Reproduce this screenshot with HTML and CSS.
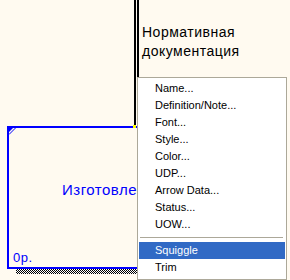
FILE: index.html
```html
<!DOCTYPE html>
<html lang="ru">
<head>
    <meta charset="UTF-8">
    <title>Diagram</title>
    <link rel="stylesheet" href="styles.css">
</head>
<body>
    <div class="canvas">
        <div class="arrow-line line-a"></div>
        <div class="arrow-line line-b"></div>
        <div class="label">Нормативная<br>документация</div>

        <div class="box">
            <svg class="corner" width="8" height="8" viewBox="0 0 8 8">
                <polygon points="0,0 4,0 0,4" fill="#0000ff"/>
                <line x1="0" y1="6.5" x2="6.5" y2="0" stroke="#0000ff" stroke-width="1"/>
            </svg>
            <div class="box-title">Изготовле</div>
            <div class="box-cost">0р.</div>
        </div>
        <div class="box-shadow"></div>
        <div class="handle"></div>

        <!-- контекстное меню стрелки -->
        <ul class="menu">
            <li>Name...</li>
            <li>Definition/Note...</li>
            <li>Font...</li>
            <li>Style...</li>
            <li>Color...</li>
            <li>UDP...</li>
            <li>Arrow Data...</li>
            <li>Status...</li>
            <li>UOW...</li>
            <li class="sep"></li>
            <li class="active">Squiggle</li>
            <li>Trim</li>
        </ul>
    </div>
</body>
</html>
```

FILE: styles.css
```css
body {
    margin: 0;
    padding: 0;
    background-color: #fffaf0;
    overflow: hidden;
}
.canvas {
    position: relative;
    width: 290px;
    height: 280px;
    overflow: hidden;
    font-family: "Liberation Sans", Arial, sans-serif;
}
.arrow-line {
    position: absolute;
    top: 0;
    width: 2px;
    background-color: #000;
}
.line-a {
    left: 134px;
    height: 126px;
}
.line-b {
    left: 137px;
    height: 80px;
}
.label {
    position: absolute;
    left: 142px;
    top: 23px;
    font-size: 14px;
    line-height: 19px;
    letter-spacing: 0.5px;
    color: #000;
}
.box {
    position: absolute;
    left: 7px;
    top: 126px;
    width: 160px;
    height: 139px;
    border: 2px solid #0000ff;
    color: #0000ff;
}
.corner {
    position: absolute;
    left: 0;
    top: 0;
}
.box-title {
    position: absolute;
    left: 53px;
    top: 53px;
    font-size: 15px;
    letter-spacing: 0.5px;
    white-space: nowrap;
}
.box-cost {
    position: absolute;
    left: 4px;
    bottom: 2px;
    font-size: 13px;
    letter-spacing: 0.5px;
}
.box-shadow {
    position: absolute;
    left: 16px;
    top: 269px;
    width: 160px;
    height: 5px;
    background: repeating-conic-gradient(#000 0 25%, #fff 0 50%) 0 0 / 2px 2px;
}
.handle {
    position: absolute;
    left: 133px;
    top: 125px;
    width: 3px;
    height: 3px;
    background-color: #ffff00;
}
.menu {
    position: absolute;
    left: 137px;
    top: 77px;
    width: 146px;
    margin: 0;
    padding: 2px 1px 3px 1px;
    list-style: none;
    background-color: #fff;
    border: 1px solid #aca899;
    font-size: 11px;
    color: #000;
}
.menu li {
    height: 17px;
    line-height: 17px;
    padding-left: 16px;
}
.menu li.sep {
    height: 4px;
    margin: 4px 2px 0 1px;
    padding: 0;
    border-top: 1px solid #aca899;
}
.menu li.active {
    background-color: #316ac5;
    color: #fff;
}
```
